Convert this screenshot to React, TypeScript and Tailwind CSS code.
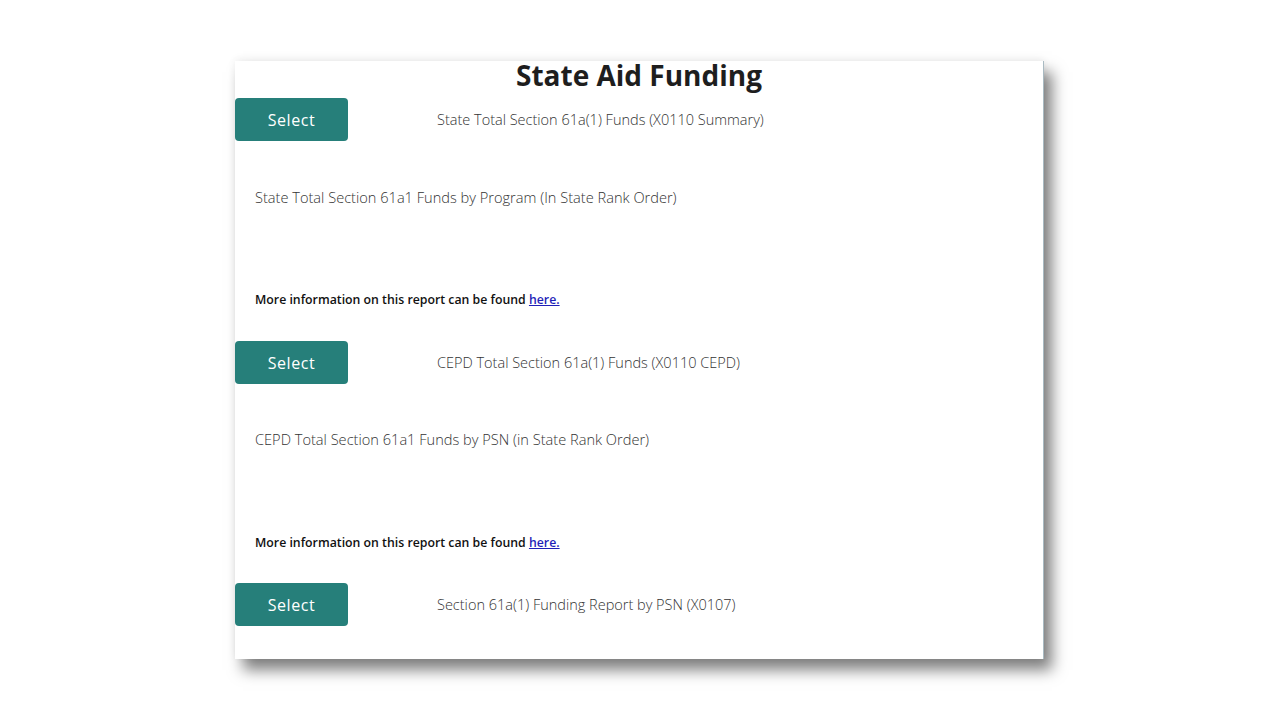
import React from "react";

const font = { fontFamily: '"Open Sans", "Noto Sans", sans-serif' };

function Row({ label }: { label: string }) {
  return (
    <div className="flex items-center h-[43px]">
      <button className="w-[113px] h-[43px] rounded-[4px] bg-[#267f7a] text-white text-[16px] tracking-[0.6px] flex items-center justify-center shrink-0">
        Select
      </button>
      <div className="ml-[89px] text-[14.5px] font-light text-[#333333] leading-[20px]">{label}</div>
    </div>
  );
}

function Section({ label, sub, second }: { label: string; sub: string; second?: boolean }) {
  return (
    <div className="flex flex-col">
      <Row label={label} />
      <div className={(second ? "mt-[45px] " : "mt-[46px] ") + "pl-[20px] text-[14.6px] font-light text-[#333333] leading-[20px]"}>{sub}</div>
      <div className={(second ? "mt-[86px] " : "mt-[85px] ") + "pl-[20px] text-[12.3px] font-semibold text-[#111111] leading-[16px]"}>
        More information on this report can be found{" "}
        <a href="#" className="text-[#1f1fb8] underline">here.</a>
      </div>
    </div>
  );
}

export default function App() {
  return (
    <div className="w-full h-[720px] bg-white flex items-center pl-[235px]" style={font}>
      <div className="w-[809px] h-[598px] bg-white border-r border-[#a9bac2] shadow-[8px_11px_14px_rgba(0,0,0,0.5),0_-2px_8px_rgba(0,0,0,0.06)] flex flex-col">
        <h1 className="text-[28px] font-bold leading-[28px] text-[#1e1e1e] text-center">State Aid Funding</h1>
        <div className="mt-[9px]">
          <Section
            label="State Total Section 61a(1) Funds (X0110 Summary)"
            sub="State Total Section 61a1 Funds by Program (In State Rank Order)"
          />
        </div>
        <div className="mt-[33px]">
          <Section
            label="CEPD Total Section 61a(1) Funds (X0110 CEPD)"
            sub="CEPD Total Section 61a1 Funds by PSN (in State Rank Order)"
            second
          />
        </div>
        <div className="mt-[32px]">
          <Row label="Section 61a(1) Funding Report by PSN (X0107)" />
        </div>
      </div>
    </div>
  );
}
